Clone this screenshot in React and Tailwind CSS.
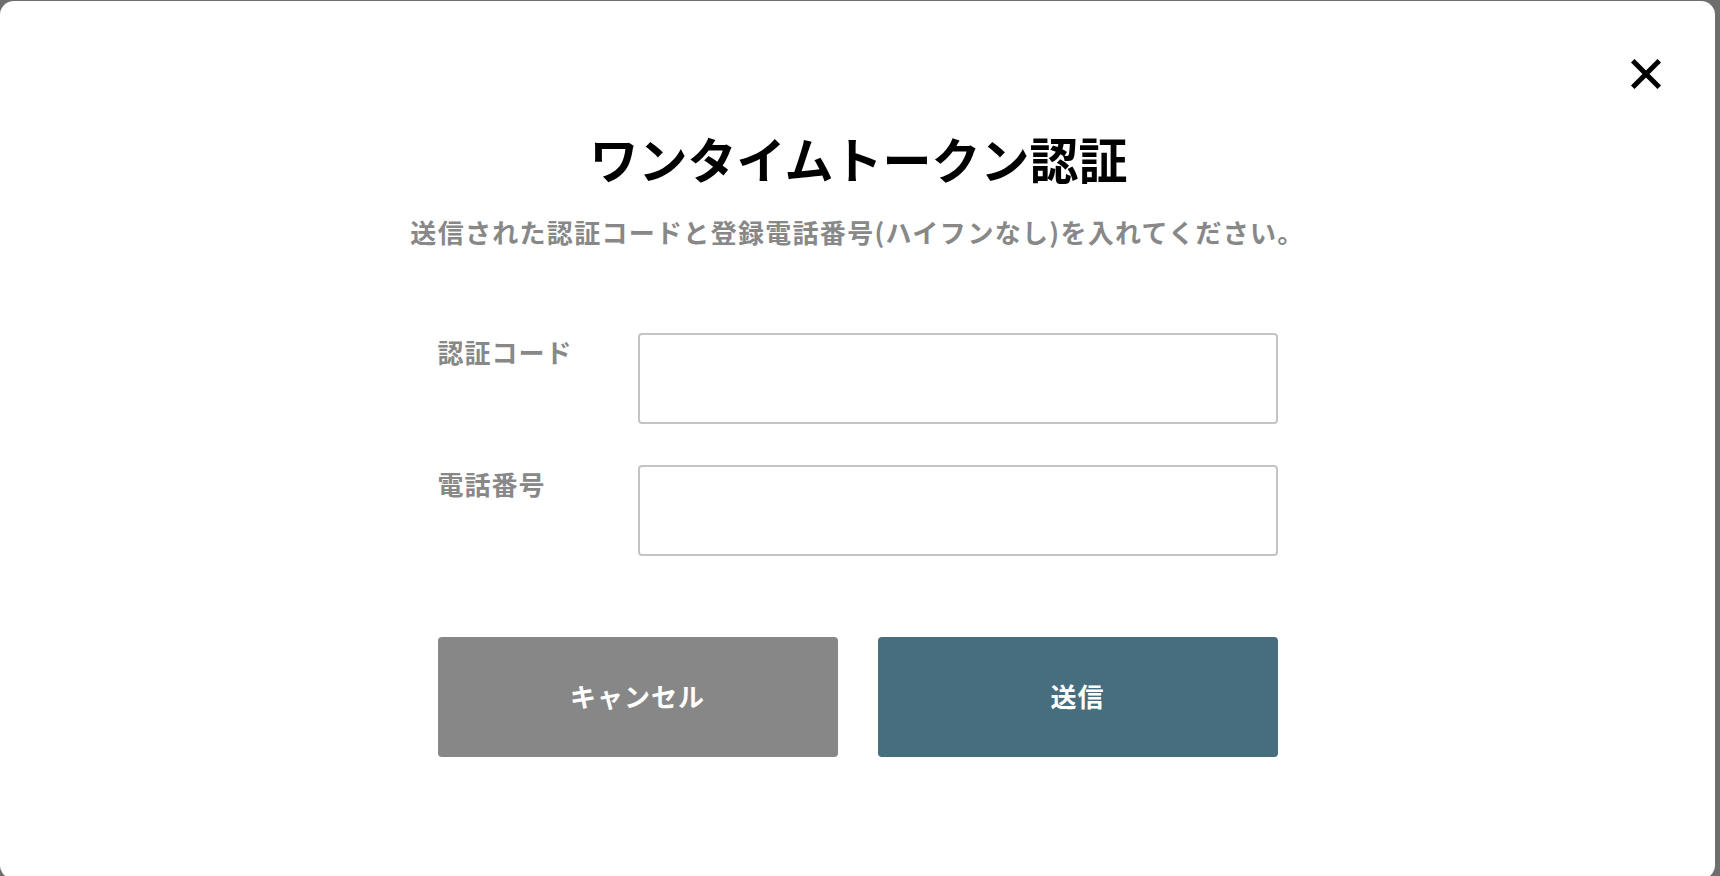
import React from "react";

const font = { fontFamily: '"Noto Sans CJK JP", "Noto Sans", sans-serif' };

const Field = ({ label }) => (
  <div className="flex items-start">
    <label className="w-[200px] mt-[6px] text-[26px] leading-[25px] font-bold tracking-[1px] text-[#888888]">
      {label}
    </label>
    <input
      type="text"
      className="w-[640px] h-[91px] border-2 border-[#c4c4c4] rounded-[4px] bg-white outline-none"
    />
  </div>
);

const App = () => {
  return (
    <div
      className="w-full h-[876px] bg-[#6e6e6e] pt-px pr-[5px] overflow-hidden"
      style={font}
    >
      <div className="relative h-[878px] bg-white rounded-[14px] flex flex-col items-center pt-[133px]">
        {/* close */}
        <button className="absolute left-[1630px] top-[57px] w-[32px] h-[32px] flex items-center justify-center">
          <svg width="30" height="30" viewBox="0 0 30 30">
            <path
              d="M3.5 3.5 L26.5 26.5 M26.5 3.5 L3.5 26.5"
              stroke="#000"
              strokeWidth="5"
              strokeLinecap="square"
              fill="none"
            />
          </svg>
        </button>

        <h1 className="text-[49px] leading-[48px] font-bold text-black ml-[2px]">
          ワンタイムトークン認証
        </h1>
        <p className="mt-[37px] text-[26px] leading-[26px] font-bold tracking-[1.3px] text-[#888888]">
          送信された認証コードと登録電話番号(ハイフンなし)を入れてください。
        </p>

        <div className="mt-[88px] w-[840px] flex flex-col gap-[41px]">
          <Field label="認証コード" />
          <Field label="電話番号" />
        </div>

        <div className="mt-[81px] w-[840px] flex gap-[40px]">
          <button className="w-[400px] h-[120px] pb-[3px] rounded-[4px] bg-[#878787] text-white text-[26px] font-bold tracking-[1px]">
            キャンセル
          </button>
          <button className="w-[400px] h-[120px] pb-[3px] rounded-[4px] bg-[#476e7e] text-white text-[26px] font-bold tracking-[1px]">
            送信
          </button>
        </div>
      </div>
    </div>
  );
};

export default App;
